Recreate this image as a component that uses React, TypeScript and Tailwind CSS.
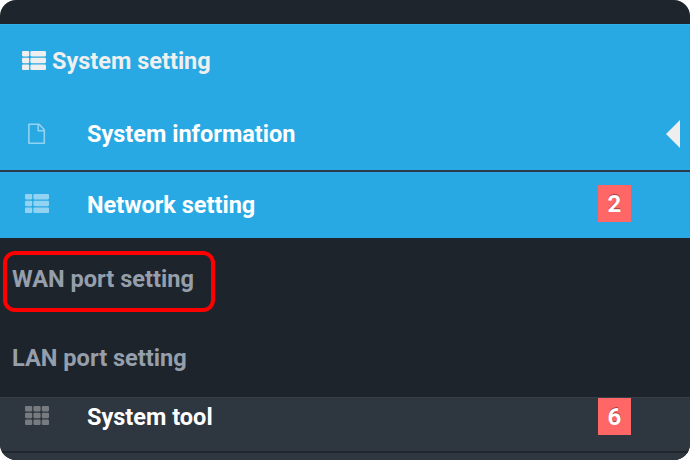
import type { ReactNode } from 'react';

function GridIcon({ columns, className }: { columns: number[][]; className: string }) {
  return (
    <svg viewBox="0 0 24 19" className={`h-[19px] w-6 shrink-0 ${className}`} fill="currentColor">
      {[0, 6.8, 13.6].map((y) =>
        columns.map(([x, w]) => <rect key={`${x}-${y}`} x={x} y={y} width={w} height="5.4" rx="1.1" />),
      )}
    </svg>
  );
}

const LIST = [[0, 7.2], [8.4, 15.6]];
const GRID = [[0, 7.2], [8.4, 7.2], [16.8, 7.2]];

function FileIcon() {
  return (
    <svg viewBox="0 0 18 22" className="ml-[3px] h-[22px] w-[18px] text-[#93d3f2]" fill="none" stroke="currentColor" strokeWidth="1.6" strokeLinejoin="round">
      <path d="M.9 1.2h10.2l5.2 5.6v13.4H.9z" />
      <path d="M10.2 1.5v6.2h5.9" />
    </svg>
  );
}

function Badge({ children }: { children: ReactNode }) {
  return (
    <span className="ml-auto mr-[59px] flex h-[37px] w-[33px] items-center justify-center bg-[#ff6666] text-2xl leading-none [text-shadow:0_-1px_0_#a83d42]">
      {children}
    </span>
  );
}

export default function App() {
  return (
    <div className="h-[460px] w-[690px] bg-white">
      <div className="flex h-full flex-col overflow-hidden rounded-[16px] bg-[#1f252d] font-['Roboto',sans-serif] text-[23.5px] font-bold leading-7 text-white">
        <div className="h-6 shrink-0" />
        <header className="flex h-[73px] shrink-0 items-center border-t border-[#2eb1ed] bg-[#28a9e3] pl-[22px] text-[#efefef]">
          <GridIcon columns={LIST} className="mb-0.5" />
          <span className="ml-1.5">System setting</span>
        </header>
        <div className="flex h-[73px] shrink-0 items-center bg-[#28a9e3] pl-[25px]">
          <div className="w-[62px]"><FileIcon /></div>
          <span>System information</span>
          <svg viewBox="0 0 14 28" className="ml-auto mr-2.5 h-7 w-3.5" fill="#eee">
            <path d="M14 0v28L0 14z" />
          </svg>
        </div>
        <div className="flex h-[68px] shrink-0 items-center border-t-2 border-[#2c394b] bg-[#28a9e3] pb-[3px] pl-[25px]">
          <div className="w-[62px]"><GridIcon columns={LIST} className="text-[#93d3f2]" /></div>
          <span className="pt-0.5">Network setting</span>
          <Badge>2</Badge>
        </div>
        <div className="h-[159px] shrink-0 bg-[#1e242b] pl-[3px] pt-[13px] text-[23.6px] text-[#959fac]">
          <div className="flex h-[61px] w-[212px] items-center rounded-[12px] border-4 border-[#ff0000] pb-[5px] pl-[5px]">
            WAN port setting
          </div>
          <div className="pl-[9px] pt-8">LAN port setting</div>
        </div>
        <div className="flex h-[54px] shrink-0 items-start border-t border-[#363e47] bg-[#2e363f] pl-[25px]">
          <div className="w-[62px] pt-2"><GridIcon columns={GRID} className="text-[#777b80]" /></div>
          <span className="pt-[5px]">System tool</span>
          <Badge>6</Badge>
        </div>
        <div className="flex-1 border-t-2 border-[#1f262d] bg-[#2e363f]" />
      </div>
    </div>
  );
}
